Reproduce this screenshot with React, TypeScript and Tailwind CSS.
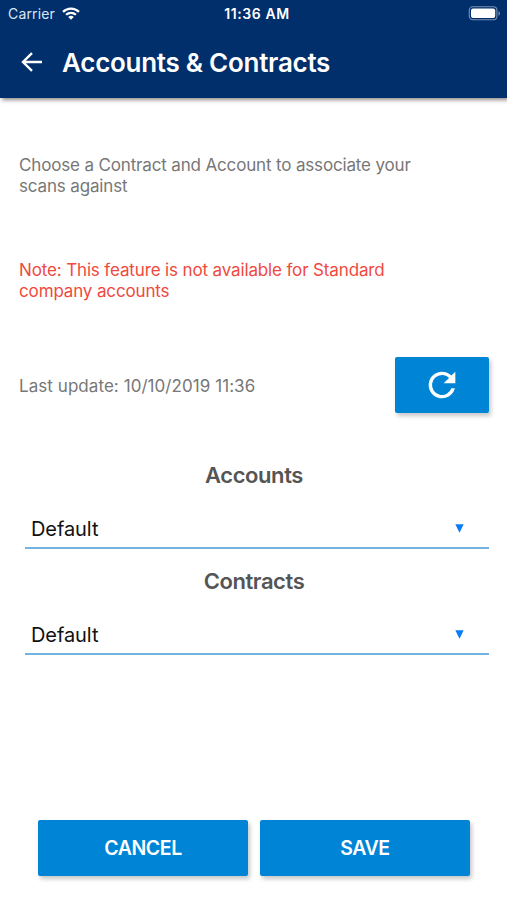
import type { ReactNode } from "react";

function Action({ children, className }: { children: ReactNode; className: string }) {
  return (
    <button
      className={`flex h-14 items-center justify-center rounded-[2px] bg-[#0084d6] text-white shadow-[2px_3px_4px_rgba(0,0,0,0.22)] ${className}`}
    >
      {children}
    </button>
  );
}

function Picker({ label, value }: { label: string; value: string }) {
  return (
    <section className="h-[106px]">
      <h2 className="h-7 pl-px text-center text-[22px] leading-7 font-[560] tracking-[-0.42px] text-[#555]">{label}</h2>
      <div className="mt-[15px] mr-[18px] ml-[25px] flex h-[45px] items-center justify-between border-b-2 border-[#74b3df] pt-[6px] pr-[25px] pl-[6px]">
        <span className="text-[20px] leading-6 tracking-[-0.08px] text-[#111]">{value}</span>
        <svg className="h-[9px] w-[9px]" viewBox="0 0 9 9">
          <path d="M.3.3h8.4L4.5 8.7z" fill="#0a7cf5" />
        </svg>
      </div>
    </section>
  );
}

export default function App() {
  return (
    <main className="flex h-[900px] w-[507px] flex-col overflow-hidden bg-white font-['Inter',sans-serif]">
      <header className="h-[98px] shrink-0 bg-[#002f6c] text-white shadow-[2px_2px_4px_rgba(40,20,20,0.5)]">
        <div className="grid h-[27px] grid-cols-3 items-center pr-[7px] pl-2 text-[14px] leading-[27px]">
          <div className="flex items-center gap-[7px]">
            <span className="tracking-[0.15px] text-[#dce6f4]">Carrier</span>
            <svg className="h-[13px] w-[18px]" viewBox="0 0 18 13">
              <g fill="none" stroke="white" strokeWidth="2.3">
                <path d="M1 4.8a11.5 11.5 0 0 1 16 0" />
                <path d="M4.1 7.8a7 7 0 0 1 9.8 0" />
              </g>
              <path d="M6.2 10a4 4 0 0 1 5.6 0L9 12.8z" fill="white" />
            </svg>
          </div>
          <span className="pl-[6px] text-center font-[560] tracking-[0.6px]">11:36 AM</span>
          <svg className="h-[15px] w-8 justify-self-end" viewBox="0 0 32 15">
            <rect x="1.3" y=".8" width="27.6" height="12.9" rx="3.5" fill="none" stroke="#7890b2" strokeWidth="1.1" />
            <rect x="3" y="2.5" width="24.2" height="9.5" rx="2" fill="white" />
            <path d="M30.5 5v4.8q1.5-.8 1.5-2.4T30.5 5" fill="#7890b2" />
          </svg>
        </div>
        <div className="flex h-[71px] items-center pl-[21px]">
          <svg className="-mt-px h-5 w-[21px]" viewBox="0 0 21 20">
            <path d="M11 1.2 2 10l9 8.8M2 10h19" fill="none" stroke="white" strokeWidth="2.4" />
          </svg>
          <h1 className="ml-5 text-[26px] leading-8 font-[570] tracking-[-0.27px]">Accounts &amp; Contracts</h1>
        </div>
      </header>
      <p className="mt-[57px] ml-[19px] w-[410px] text-[17px] leading-[21px] tracking-[-0.155px] text-[#777]">
        Choose a Contract and Account to associate your scans against
      </p>
      <p className="mt-[63px] ml-[19px] w-[410px] text-[17px] leading-[21px] tracking-[-0.14px] text-[#f0493e]">
        Note: This feature is not available for Standard company accounts
      </p>
      <div className="mt-[55px] mr-[18px] ml-[19px] flex items-center justify-between">
        <p className="pt-[2px] text-[17px] leading-[21px] tracking-[0.06px] text-[#777]">Last update: 10/10/2019 11:36</p>
        <Action className="w-[94px]">
          <svg className="h-10 w-10" viewBox="0 0 24 24" fill="currentColor">
            <path d="M17.65 6.35A7.958 7.958 0 0 0 12 4a8 8 0 1 0 7.73 10h-2.08A6 6 0 1 1 12 6c1.66 0 3.14.69 4.22 1.78L13 11h7V4z" />
          </svg>
        </Action>
      </div>
      <div className="mt-[48px]">
        <Picker label="Accounts" value="Default" />
        <Picker label="Contracts" value="Default" />
      </div>
      <footer className="mt-auto mb-[24px] ml-[38px] flex gap-3 text-[19.5px] font-[560] tracking-[-0.42px]">
        <Action className="w-[210px] pt-[2px]">CANCEL</Action>
        <Action className="w-[210px] pt-[2px]">SAVE</Action>
      </footer>
    </main>
  );
}
